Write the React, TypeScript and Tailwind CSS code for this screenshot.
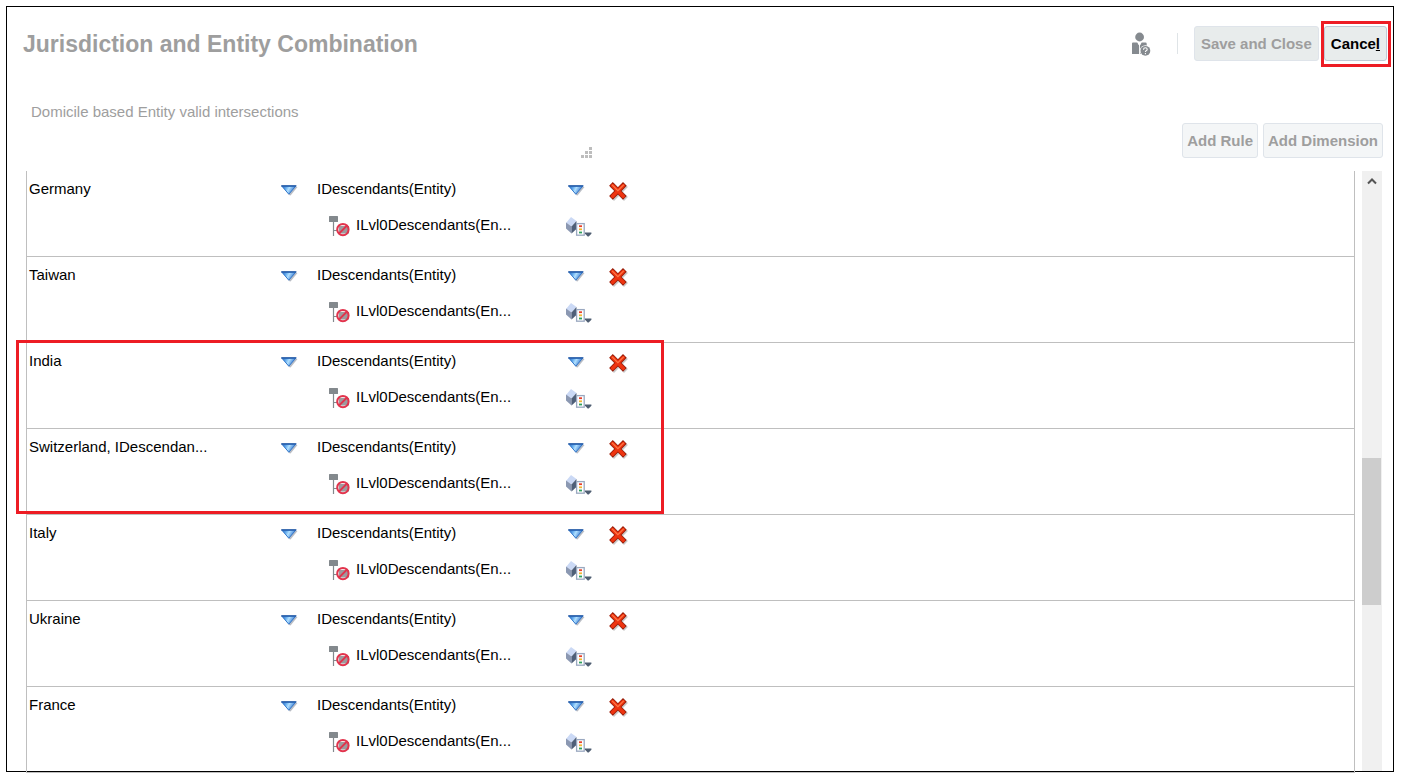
import { useState } from 'react';

type Rule = {
  id: number;
  jurisdiction: string;
  entity: string;
  exclusion: string;
};

const initialRules: Rule[] = [
  'Germany',
  'Taiwan',
  'India',
  'Switzerland, IDescendan...',
  'Italy',
  'Ukraine',
  'France',
].map((jurisdiction, id) => ({
  id,
  jurisdiction,
  entity: 'IDescendants(Entity)',
  exclusion: 'ILvl0Descendants(En...',
}));

function DropdownIcon() {
  return (
    <svg width="17" height="11" viewBox="0 0 17 11" aria-hidden="true">
      <defs>
        <linearGradient id="dropdown-fill" x1="0" y1="0" x2="1" y2="0.3">
          <stop offset="0" stopColor="#2a63b4" />
          <stop offset="0.3" stopColor="#5ba4ea" />
          <stop offset="0.55" stopColor="#b0e0ff" />
          <stop offset="1" stopColor="#2a6ccb" />
        </linearGradient>
      </defs>
      <path d="M3 2h13.5L9.5 10.5 8 10z" fill="#7d8593" opacity="0.55" />
      <path d="M0.9 1.2h13.8L7.8 9.2z" fill="url(#dropdown-fill)" stroke="#3277cb" strokeWidth="1" />
      <path d="M0.2 0.9h15.2" stroke="#1f55a3" strokeWidth="1.4" />
    </svg>
  );
}

function RemoveIcon() {
  return (
    <svg width="19" height="19" viewBox="0 0 19 19" aria-hidden="true">
      <path d="M5 5l10 10M15 5L5 15" stroke="#666" strokeWidth="5.5" strokeLinecap="square" opacity="0.35" />
      <path d="M3.8 3.8l10.2 10.2M14 3.8L3.8 14" stroke="#9c1d08" strokeWidth="5.2" strokeLinecap="square" />
      <path d="M3.6 3.6l10.6 10.6M14.2 3.6L3.6 14.2" stroke="#ee3410" strokeWidth="3.6" strokeLinecap="round" />
      <path d="M3.4 3.2l5.5 5.5 5.5-5.5" stroke="#ff7a48" strokeWidth="1.1" fill="none" strokeLinecap="round" />
    </svg>
  );
}

function ExclusionIcon() {
  return (
    <svg width="21" height="21" viewBox="0 0 21 21" aria-hidden="true">
      <rect width="9" height="6" rx="0.5" fill="#83898d" />
      <path d="M4.5 6v14M4.5 14.5H8" stroke="#83898d" strokeWidth="1.2" />
      <rect x="10" y="10" width="10" height="7.5" fill="#83898d" />
      <circle cx="13.9" cy="13.6" r="5.7" fill="#d9c3c7" fillOpacity="0.3" stroke="#e2334c" strokeWidth="2" />
      <path d="M9.9 17.6l8-8" stroke="#e2334c" strokeWidth="2" />
    </svg>
  );
}

function MemberSelectorIcon() {
  return (
    <svg width="26" height="21" viewBox="0 0 26 21" aria-hidden="true">
      <path d="M0 6l5-6 5.5 4-5 5.5z" fill="#cbd9f5" />
      <path d="M0 5.5l5.5 4v7L0 11.5z" fill="#8b98b2" />
      <path d="M10.5 4v8l-5 4.5v-7z" fill="#4f5f78" />
      <rect x="10.6" y="6.6" width="7.6" height="11.6" fill="#fff" stroke="#9aa8c0" strokeWidth="1.3" />
      <path d="M13 9.2h3" stroke="#e8402a" strokeWidth="1.8" />
      <path d="M13 12.3h3" stroke="#f2b632" strokeWidth="1.8" />
      <path d="M13 15.5h3" stroke="#2fa05f" strokeWidth="1.8" />
      <path d="M19 15.5h6.4v1.2l-2.7 2.8h-1L19 16.7z" fill="#4f5e72" />
    </svg>
  );
}

function AccessibilityHelpIcon() {
  return (
    <svg width="20" height="24" viewBox="0 0 20 24" aria-hidden="true">
      <circle cx="8.6" cy="5" r="4.4" fill="#858a8f" />
      <path d="M1 11.5q0-1 1-1h4.2l2.3 3.5 2.2-3.5h3.8q1.2 0 1.2 1.2V22H1z" fill="#858a8f" />
      <path d="M6.8 10.5h3.2l-1 3v8.5h-.9v-8.5z" fill="#fff" />
      <circle cx="14.4" cy="18.8" r="5.6" fill="#fff" />
      <circle cx="14.4" cy="18.8" r="4.9" fill="#858a8f" />
      <path d="M12.5 17.7q.1-1.9 1.9-1.9t1.8 1.5q0 1-1 1.4-.8.4-.8 1.2M14.4 21v1.2" stroke="#fff" strokeWidth="1.1" fill="none" />
    </svg>
  );
}

function RuleRow({ rule, onRemove }: { rule: Rule; onRemove: (id: number) => void }) {
  return (
    <tr className="align-top">
      <td className="h-[86px] border-b border-[#bfbfbf] p-0">
        <div className="flex h-9 items-center justify-between pl-0.5 pr-[19px]">
          <span>{rule.jurisdiction}</span>
          <button type="button" aria-label={`${rule.jurisdiction} options`} className="mt-0.5">
            <DropdownIcon />
          </button>
        </div>
      </td>
      <td className="border-b border-[#bfbfbf] p-0">
        <div className="flex h-9 items-center justify-between pr-6">
          <span>{rule.entity}</span>
          <button type="button" aria-label={`${rule.entity} options`} className="mt-0.5">
            <DropdownIcon />
          </button>
        </div>
        <div className="flex h-9 items-center pl-3 pr-[17px]">
          <span className="mt-0.5">
            <ExclusionIcon />
          </span>
          <span className="ml-1.5 flex-1">{rule.exclusion}</span>
          <button type="button" aria-label="Select members" className="mt-1">
            <MemberSelectorIcon />
          </button>
        </div>
      </td>
      <td className="border-b border-[#bfbfbf] p-0">
        <div className="flex h-9 items-center">
          <button type="button" aria-label={`Remove ${rule.jurisdiction}`} className="mt-1" onClick={() => onRemove(rule.id)}>
            <RemoveIcon />
          </button>
        </div>
      </td>
    </tr>
  );
}

export default function App() {
  const [rules, setRules] = useState(initialRules);

  const removeRule = (id: number) => setRules((prev) => prev.filter((rule) => rule.id !== id));

  return (
    <main className="flex h-screen flex-col overflow-hidden bg-white pb-0.5 pl-1.5 pr-2.5 pt-1.5 font-['Liberation_Sans',Arial,sans-serif] text-[15px] leading-5 text-black">
      <div className="flex min-h-0 flex-1 flex-col border border-black">
        <header className="flex shrink-0 items-center pl-4 pr-1.5 pt-[19px]">
          <h1 className="flex-1 text-[23px] font-bold leading-8 text-[#9e9e9e]">Jurisdiction and Entity Combination</h1>
          <button type="button" aria-label="Accessibility help">
            <AccessibilityHelpIcon />
          </button>
          <div className="ml-[26px] mr-4 h-[21px] w-px bg-[#dfe4e7]" />
          <button type="button" disabled className="h-[35px] rounded-[3px] border border-[#dfe4ea] bg-[#e8ecec] px-1.5 font-bold text-[#9e9e9e]">
            Save and Close
          </button>
          <div className="relative ml-[5px]">
            <button type="button" className="h-[35px] rounded-[3px] border border-[#c0cad6] bg-[#e8ecec] px-1.5 font-bold">
              Cance<span className="underline">l</span>
            </button>
            <div className="pointer-events-none absolute -bottom-1.5 -left-[3px] -right-1 -top-[5px] border-3 border-[#ed1c24]" />
          </div>
        </header>

        <div className="mt-[41px] flex shrink-0 items-end justify-between pl-[19px] pr-2.5">
          <div className="relative mr-4 w-[566px]">
            <textarea
              disabled
              aria-label="Description"
              defaultValue="Domicile based Entity valid intersections"
              className="block h-14 w-full resize-none overflow-hidden pl-[5px] text-[#9e9e9e]"
            />
            <svg className="absolute bottom-0 right-0" width="11" height="11" viewBox="0 0 11 11" aria-hidden="true">
              <path d="M8 0h3v3H8zM4 4h3v3H4zM8 4h3v3H8zM0 8h3v3H0zM4 8h3v3H4zM8 8h3v3H8z" fill="#bdbdbd" />
            </svg>
          </div>
          <div className="flex gap-[5px]">
            <button type="button" disabled className="h-[35px] rounded-[3px] border border-[#dfe4ea] bg-[#f4f6f7] px-1 font-bold text-[#9e9e9e]">
              Add Rule
            </button>
            <button type="button" disabled className="h-[35px] rounded-[3px] border border-[#dfe4ea] bg-[#f4f6f7] px-1 font-bold text-[#9e9e9e]">
              Add Dimension
            </button>
          </div>
        </div>

        <div className="mt-[13px] flex min-h-0 flex-1 pl-[19px] pr-[11px]">
          <div className="relative flex-1">
            <table className="w-full table-fixed border-separate border-spacing-0 border-x border-[#bfbfbf]">
              <colgroup>
                <col className="w-[290px]" />
                <col className="w-[292px]" />
                <col />
              </colgroup>
              <tbody>
                {rules.map((rule) => (
                  <RuleRow key={rule.id} rule={rule} onRemove={removeRule} />
                ))}
              </tbody>
            </table>
            <div className="pointer-events-none absolute -left-2.5 top-[169px] h-[174px] w-[648px] border-3 border-[#ed1c24]" />
          </div>
          <div className="ml-[7px] w-5 bg-[#f0f0f0]">
            <button type="button" aria-label="Scroll up" className="flex h-5 w-5 items-center justify-center">
              <svg width="10" height="8" viewBox="0 0 10 8" fill="none" aria-hidden="true">
                <path d="M1 6.5l4-4 4 4" stroke="#555" strokeWidth="2" />
              </svg>
            </button>
            <div className="mt-[267px] h-[147px] w-[19px] bg-[#cdcdcd]" />
          </div>
        </div>
      </div>
    </main>
  );
}
